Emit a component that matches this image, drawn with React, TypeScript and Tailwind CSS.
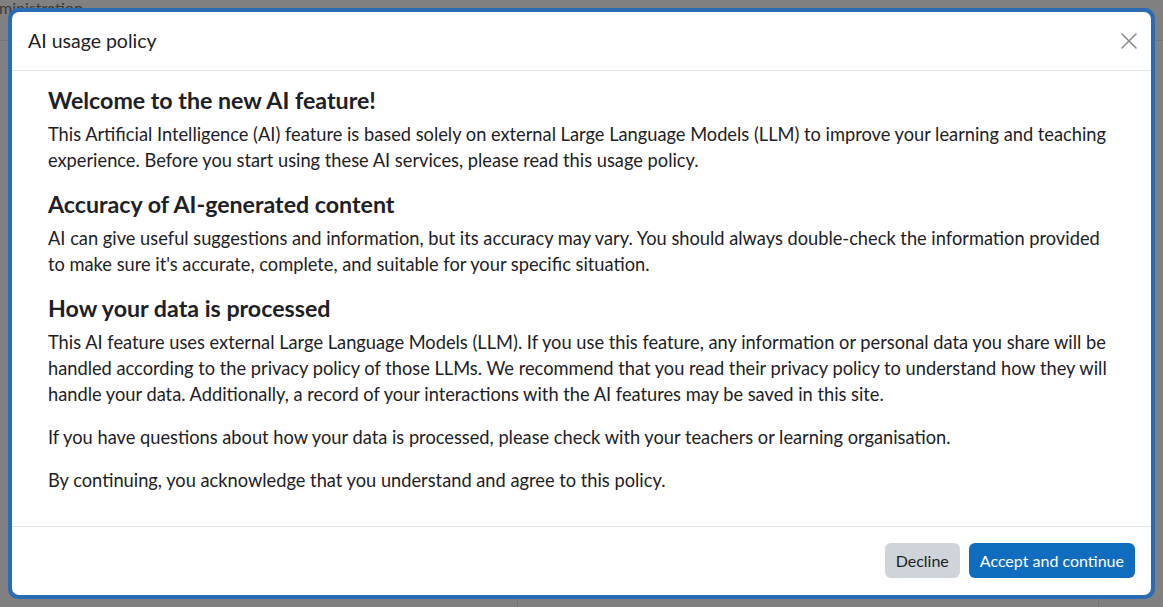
import { X } from "lucide-react"

const sections = [
  {
    title: "Welcome to the new AI feature!",
    paragraphs: [
      "This Artificial Intelligence (AI) feature is based solely on external Large Language Models (LLM) to improve your learning and teaching experience. Before you start using these AI services, please read this usage policy.",
    ],
  },
  {
    title: "Accuracy of AI-generated content",
    paragraphs: [
      "AI can give useful suggestions and information, but its accuracy may vary. You should always double-check the information provided to make sure it's accurate, complete, and suitable for your specific situation.",
    ],
  },
  {
    title: "How your data is processed",
    paragraphs: [
      "This AI feature uses external Large Language Models (LLM). If you use this feature, any information or personal data you share will be handled according to the privacy policy of those LLMs. We recommend that you read their privacy policy to understand how they will handle your data. Additionally, a record of your interactions with the AI features may be saved in this site.",
      "If you have questions about how your data is processed, please check with your teachers or learning organisation.",
      "By continuing, you acknowledge that you understand and agree to this policy.",
    ],
  },
]

export default function App() {
  return (
    <div className="relative h-[607px] w-full overflow-hidden bg-[#808080] font-['Lato',sans-serif] text-[#1d2125]">
      {/* page behind the backdrop */}
      <div className="absolute left-0 top-0 h-full w-full">
        <span className="absolute -left-[1px] top-0 text-[16px] leading-[16px] text-[#3a3a3a]">ministration</span>
        <div className="absolute left-0 top-[40px] h-px w-full bg-[#737373]" />
        <div className="absolute bottom-0 left-[517px] h-[10px] w-px bg-[#737373]" />
        <div className="absolute bottom-0 left-[1098px] h-[10px] w-px bg-[#737373]" />
      </div>

      <div className="relative p-2">
        <div className="h-[591px] rounded-[10px] bg-[#2a6cb3] p-1">
          <div className="flex h-full flex-col rounded-[7px] bg-white">
            <header className="flex h-[59px] shrink-0 items-center justify-between border-b border-[#dee2e6] pl-4 pr-[4px]">
              <h2 className="text-[19.5px] leading-none">AI usage policy</h2>
              <button className="flex h-9 w-9 items-center justify-center text-[#8a8a8a]">
                <X className="h-[28px] w-[28px]" strokeWidth={1.3} />
              </button>
            </header>

            <div className="flex-1 px-9 pt-[15px]">
              {sections.map((s) => (
                <section key={s.title}>
                  <h3 className="mb-[7px] text-[23.2px] font-bold leading-[28px]">{s.title}</h3>
                  {s.paragraphs.map((p) => (
                    <p key={p} className="mb-[17px] text-[18.25px] leading-[26px]">
                      {p}
                    </p>
                  ))}
                </section>
              ))}
            </div>

            <footer className="flex shrink-0 justify-end gap-[9px] border-t border-[#dee2e6] px-4 pb-[17px] pt-4">
              <button className="h-[35px] rounded-md bg-[#ced4da] px-[11px] text-[16px] text-[#1d2125]">Decline</button>
              <button className="h-[35px] rounded-md bg-[#0f6cbf] px-[11px] text-[16px] text-white">Accept and continue</button>
            </footer>
          </div>
        </div>
      </div>
    </div>
  )
}
